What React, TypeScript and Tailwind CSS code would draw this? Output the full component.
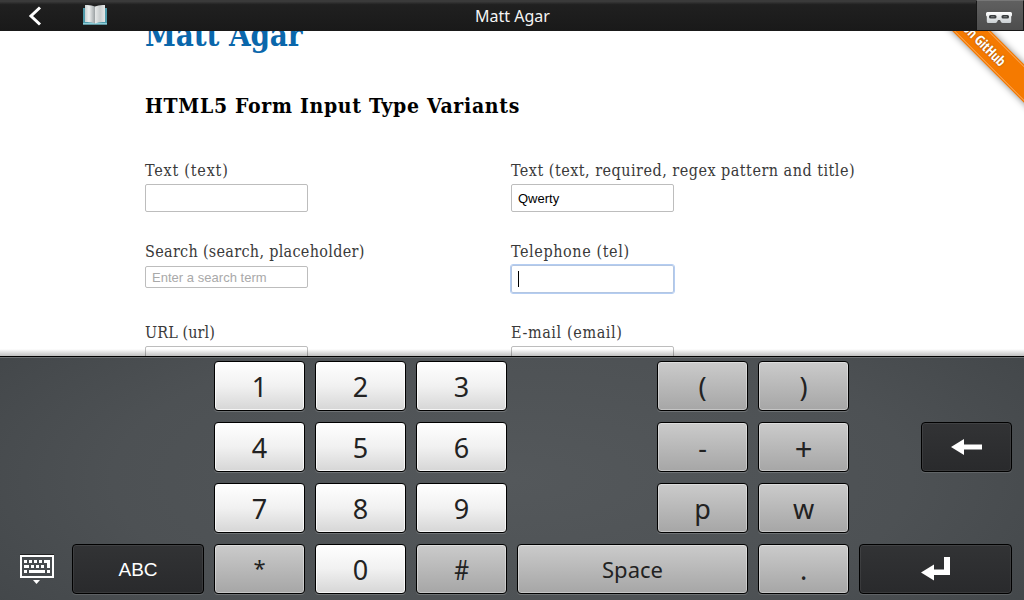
import type { ReactNode } from "react";

type Tone = "light" | "grey" | "dark";

const tones: Record<Tone, string> = {
  light:
    "bg-linear-to-b from-white via-[#f1f1f1] to-[#d6d6d6] text-[#222] shadow-[inset_0_0_0_1px_rgba(255,255,255,0.75),0_1px_0_rgba(255,255,255,0.18)]",
  grey: "bg-linear-to-b from-[#cbcbcb] to-[#a6a6a6] text-[#222] shadow-[inset_0_0_0_1px_rgba(255,255,255,0.35),0_1px_0_rgba(255,255,255,0.18)]",
  dark: "bg-linear-to-b from-[#323335] to-[#292a2c] text-white shadow-[inset_0_0_0_1px_rgba(255,255,255,0.07),0_1px_0_rgba(255,255,255,0.12)]",
};

function Key({
  tone = "light",
  className = "",
  children,
}: {
  tone?: Tone;
  className?: string;
  children: ReactNode;
}) {
  return (
    <button
      type="button"
      className={`flex h-[50px] items-center justify-center rounded-[4px] border border-black font-['Noto_Sans',sans-serif] text-[27px] leading-none ${tones[tone]} ${className}`}
    >
      {children}
    </button>
  );
}

function Field({ label, spacing, children }: { label: string; spacing: string; children: ReactNode }) {
  return (
    <div className="h-[81px]">
      <label className={`block h-[27px] whitespace-nowrap text-[16px] leading-[27px] text-[#3a3a3a] ${spacing}`}>
        {label}
      </label>
      {children}
    </div>
  );
}

const box =
  "flex w-[163px] items-center rounded-[2px] border bg-white px-1.5 pt-px font-['Liberation_Sans',sans-serif] text-[13px]";

function BackIcon() {
  return (
    <svg width="14" height="20" viewBox="0 0 14 20" fill="none" stroke="#fff" strokeWidth="3">
      <path d="M12 1.500 3 10l9 8.500" />
    </svg>
  );
}

function BookIcon() {
  return (
    <svg width="26" height="22" viewBox="0 0 26 22">
      <defs>
        <linearGradient id="leftPage" x1="0" x2="1" y1="0" y2="0">
          <stop offset="0" stopColor="#c9cfd0" />
          <stop offset="0.4" stopColor="#eef0f0" />
          <stop offset="1" stopColor="#9ba1a3" />
        </linearGradient>
        <linearGradient id="rightPage" x1="0" x2="1" y1="0" y2="0">
          <stop offset="0" stopColor="#e6e8e8" />
          <stop offset="0.5" stopColor="#c9cdce" />
          <stop offset="1" stopColor="#e4e7e7" />
        </linearGradient>
      </defs>
      <path d="M1 4h24v16.500H1z" fill="#4f9aaa" />
      <path d="M1 19h24v1.500H1z" fill="#8ccfdb" />
      <path d="M3 1q6-.5 10 1.500v17q-4-2-10-1.500z" fill="url(#leftPage)" />
      <path d="M23 1q-6-.5-10 1.500v17q4-2 10-1.500z" fill="url(#rightPage)" />
    </svg>
  );
}

function MaskIcon() {
  return (
    <svg width="28" height="14" viewBox="0 0 28 14">
      <defs>
        <linearGradient id="mask" x1="0" x2="0" y1="0" y2="1">
          <stop offset="0" stopColor="#ffffff" />
          <stop offset="1" stopColor="#c9ced1" />
        </linearGradient>
      </defs>
      <path
        d="M2.500 1h23q1.500 0 1.500 1.500v2l-.8 1v5q0 1.500-1.500 1.500h-7q-1.200 0-1.700-1L15 9h-2l-1 2q-.5 1-1.700 1H3.300q-1.500 0-1.500-1.500v-5L1 4.500v-2Q1 1 2.500 1z"
        fill="url(#mask)"
      />
      <rect x="4" y="4" width="7.500" height="3.500" rx="1.600" fill="#3a3d3f" />
      <rect x="16.500" y="4" width="7.500" height="3.500" rx="1.600" fill="#3a3d3f" />
      <path d="M6 5.300h3.500v1H6zM18.500 5.300H22v1h-3.500z" fill="#7d8183" />
    </svg>
  );
}

function KeyboardIcon() {
  return (
    <svg width="36" height="32" viewBox="0 0 36 32" shapeRendering="crispEdges">
      <path d="M1 1.500h34" stroke="#222" strokeWidth="1" />
      <path d="M2 3h32v21H2z" fill="none" stroke="#fff" strokeWidth="2" />
      <path
        d="M5 7h3v3H5zM10 7h3v3h-3zM15 7h3v3h-3zM20 7h3v3h-3zM25 7h6v8h-3v-5h-3zM5 12h5v3H5zM12 12h3v3h-3zM17 12h3v3h-3zM22 12h3v3h-3zM5 17h3v3H5zM10 17h16v3H10zM28 17h3v3h-3z"
        fill="#fff"
      />
      <path d="M14 27h7l-3.500 4z" fill="#fff" shapeRendering="auto" />
    </svg>
  );
}

export default function App() {
  return (
    <div className="flex h-[600px] w-[1024px] flex-col overflow-hidden bg-white">
      <header className="relative z-10 flex h-[31px] items-center bg-linear-to-b from-[#3a3a3a] from-5% via-[#202020] via-15% to-[#191919]">
        <div className="flex w-[70px] justify-center">
          <BackIcon />
        </div>
        <div className="w-[50px] pb-px pl-3">
          <BookIcon />
        </div>
        <div className="flex-1 pl-[355px] font-['Noto_Sans',sans-serif] text-[16px] leading-[30px] text-[#f5f5f5]">
          Matt Agar
        </div>
        <div className="flex h-full w-[48px] items-center justify-center border border-[#171717] border-t-[#777] bg-linear-to-b from-[#606060] to-[#4d4d4d] pt-1 pr-0.5">
          <MaskIcon />
        </div>
      </header>

      <main className="relative h-[325px] overflow-hidden pl-[145px] font-['DejaVu_Serif_Condensed','DejaVu_Serif',serif] [font-stretch:condensed]">
        <h1 className="-mt-4 h-10 whitespace-nowrap text-[31px] leading-10 font-bold tracking-[-0.1px] text-[#0a67ab]">
          Matt Agar
        </h1>
        <h2 className="mt-[35px] h-8 whitespace-nowrap text-[21px] leading-8 font-bold tracking-[0.7px] text-black">
          HTML5 Form Input Type Variants
        </h2>
        <div className="mt-[35px] grid grid-cols-[366px_400px]">
          <Field label="Text (text)" spacing="tracking-[0.8px]">
            <div className={`${box} h-7 border-[#bdbdbd]`} />
          </Field>
          <Field label="Text (text, required, regex pattern and title)" spacing="tracking-[0.49px]">
            <div className={`${box} h-7 border-[#bdbdbd] text-black`}>Qwerty</div>
          </Field>
          <Field label="Search (search, placeholder)" spacing="tracking-[0.31px]">
            <div className={`${box} mt-px h-[22px] border-[#bdbdbd] tracking-[0.03px] text-[#a9a9a9]`}>
              Enter a search term
            </div>
          </Field>
          <Field label="Telephone (tel)" spacing="tracking-[0.6px]">
            <div className={`${box} h-7 border-[#b3c6e2] outline-1 outline-[#b4cdf2]`}>
              <span className="mb-px h-4 w-px bg-black" />
            </div>
          </Field>
          <Field label="URL (url)" spacing="tracking-[0.1px]">
            <div className={`${box} h-7 border-[#bdbdbd]`} />
          </Field>
          <Field label="E-mail (email)" spacing="tracking-[0.62px]">
            <div className={`${box} h-7 border-[#bdbdbd]`} />
          </Field>
        </div>

        <div className="absolute top-[-14px] left-[861px] flex h-[27px] w-[220px] rotate-45 items-center justify-center border-y border-[#f57a00] bg-[#f57a00] pr-1.5 pb-px font-['Open_Sans',sans-serif] text-[14px] font-bold tracking-[-0.1px] whitespace-nowrap text-white shadow-[0_0_7px_rgba(0,0,0,0.5),inset_0_1px_0_#f9a85c,inset_0_-1px_0_#f9a85c] [text-shadow:0_0_2px_rgba(0,0,0,0.4)]">
          Fork me on GitHub
        </div>
        <div className="absolute bottom-0 left-0 h-[7px] w-full bg-linear-to-b from-transparent to-black/25" />
      </main>

      <section className="grid h-[244px] grid-cols-[62px_132px_91px_91px_91px_130px_91px_91px_52px_91px] content-start gap-x-2.5 gap-y-[11px] border-t border-black bg-[radial-gradient(ellipse_65%_100%_at_50%_50%,#54585b,#4d5154_60%,#414548)] pt-1 shadow-[inset_0_1px_0_#6d7173]">
        <Key className="col-start-3">1</Key>
        <Key>2</Key>
        <Key>3</Key>
        <Key tone="grey" className="col-start-7">(</Key>
        <Key tone="grey">)</Key>

        <Key className="col-start-3">4</Key>
        <Key>5</Key>
        <Key>6</Key>
        <Key tone="grey" className="col-start-7">-</Key>
        <Key tone="grey">
          <span className="pt-0.5 text-[31px]">+</span>
        </Key>
        <Key tone="dark" className="col-start-10">
          <svg width="31" height="16" viewBox="0 0 31 16" fill="#fff">
            <path d="M0 8 13 0v5.500h18v5H13V16z" />
          </svg>
        </Key>

        <Key className="col-start-3">7</Key>
        <Key>8</Key>
        <Key>9</Key>
        <Key tone="grey" className="col-start-7">p</Key>
        <Key tone="grey">w</Key>

        <div className="col-start-1 flex items-center justify-center pb-px pl-3">
          <KeyboardIcon />
        </div>
        <Key tone="dark">
          <span className="font-['Liberation_Sans',sans-serif] text-[19px]">ABC</span>
        </Key>
        <Key tone="grey">
          <span className="pb-[5px] text-[22px]">*</span>
        </Key>
        <Key>0</Key>
        <Key tone="grey">
          <span className="inline-block scale-x-85">#</span>
        </Key>
        <Key tone="grey" className="col-span-2">
          <span className="text-[22px]">Space</span>
        </Key>
        <Key tone="grey">.</Key>
        <Key tone="dark" className="col-span-2">
          <svg className="mr-px" width="29" height="24" viewBox="0 0 29 24" fill="#fff">
            <path d="M0 15.500 13 7.500v5h10V0h6v18H13v5.500z" />
          </svg>
        </Key>
      </section>
    </div>
  );
}
